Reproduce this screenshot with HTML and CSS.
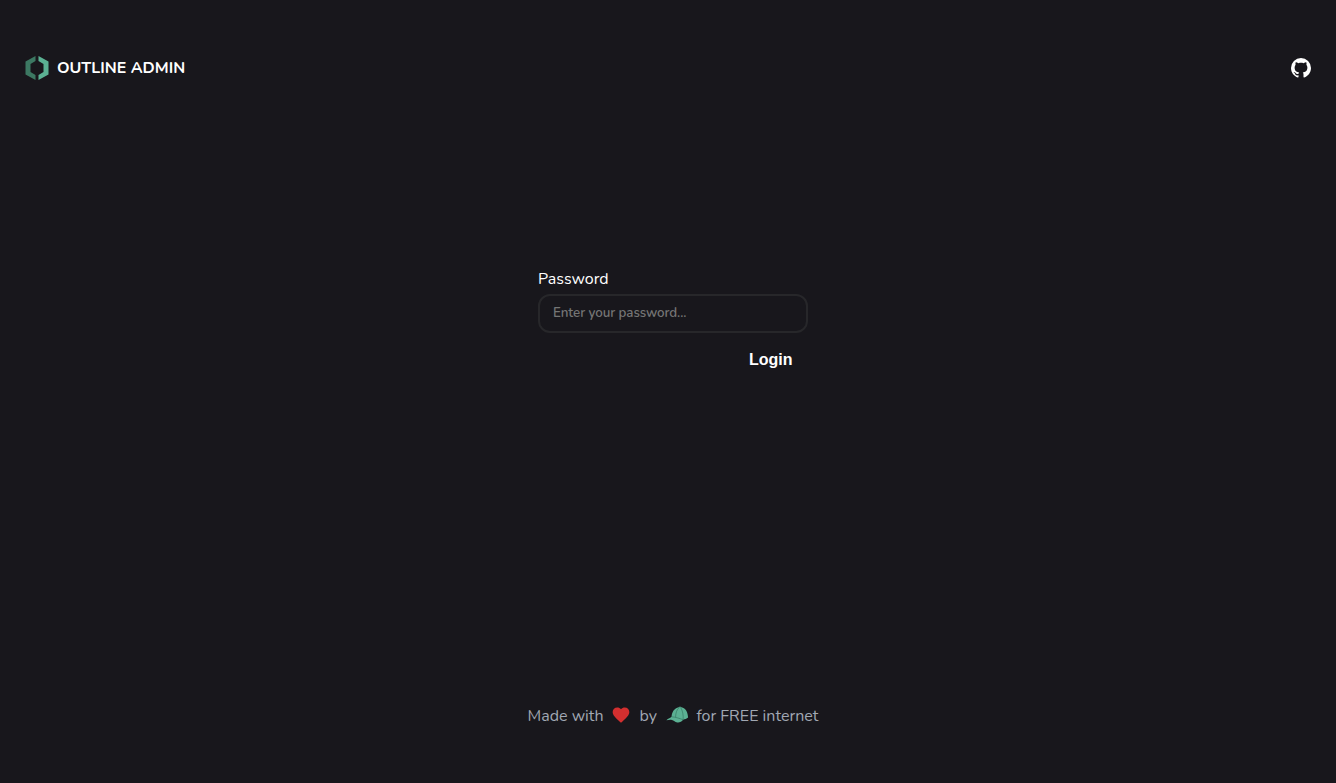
FILE: index.html
```html
<!DOCTYPE html>
<html lang="en">
<head>
<meta charset="utf-8">
<title>Outline Admin</title>
<link rel="stylesheet" href="styles.css">
</head>
<body>
<div class="page">
  <header class="header">
    <a class="brand">
      <svg class="brand-logo" width="24" height="24" viewBox="0 0 24 24">
        <path fill="#3c7862" d="M10.500 0 .5 5.500v13l10 5.500v-5l-5-3V8l5-3z"/>
        <path fill="#5bb193" d="m13.500 0 10 5.500v13l-10 5.500v-5l5-3V8l-5-3z"/>
      </svg>
      <span class="brand-name">OUTLINE ADMIN</span>
    </a>
    <a class="github" aria-label="GitHub">
      <svg width="24" height="24" viewBox="0 0 24 24" fill="#fff"><path d="M12 2A10 10 0 0 0 2 12c0 4.42 2.87 8.17 6.84 9.5.5.08.66-.23.66-.5v-1.69c-2.77.6-3.36-1.34-3.36-1.34-.46-1.16-1.11-1.47-1.11-1.47-.91-.62.07-.6.07-.6 1 .07 1.53 1.03 1.53 1.03.87 1.52 2.34 1.07 2.91.83.09-.65.35-1.09.63-1.34-2.22-.25-4.55-1.11-4.55-4.92 0-1.11.38-2 1.03-2.71-.1-.25-.45-1.29.1-2.64 0 0 .84-.27 2.75 1.02.79-.22 1.65-.33 2.5-.33s1.71.11 2.5.33c1.91-1.29 2.75-1.02 2.75-1.02.55 1.35.2 2.39.1 2.64.65.71 1.03 1.6 1.03 2.71 0 3.82-2.34 4.66-4.57 4.91.36.31.69.92.69 1.85V21c0 .27.16.59.67.5C19.14 20.16 22 16.42 22 12A10 10 0 0 0 12 2z"/></svg>
    </a>
  </header>
  <main class="main">
    <form class="form">
      <label class="label" for="password">Password</label>
      <input class="input" id="password" type="password" placeholder="Enter your password...">
      <button class="login" type="button">Login</button>
    </form>
  </main>
  <footer class="footer">
    <span class="made">Made with</span>
    <svg class="heart" width="20" height="20" viewBox="0 0 24 24" fill="#d32f2f"><path d="m12 21.35-1.45-1.32C5.4 15.36 2 12.28 2 8.5 2 5.42 4.42 3 7.5 3c1.74 0 3.41.81 4.5 2.09C13.09 3.81 14.76 3 16.5 3 19.58 3 22 5.42 22 8.5c0 3.78-3.4 6.86-8.55 11.54z"/></svg>
    <span class="by">by</span>
    <svg class="cap" width="24" height="18" viewBox="0 0 24 18">
      <path fill="#5bb193" d="M.4 14.300c1.100-1.500 3.500-2.200 5.200-3.500C5.800 5.800 8.300 2.200 12.700 1.200l1.300-.6 1.400.6c4.500.7 6.400 5.400 6.700 10.300-1.400 1.200-3.100 1.800-5 2.200-1.500 1.900-3.700 3.100-5.800 2.700-2.400-.4-4-2.400-6.200-2.700-1.700-.2-3.200.5-4.700.6z"/>
      <path fill="none" stroke="#30705b" stroke-width=".6" d="M5.600 10.800c4 .3 7.500 1.500 11.500 2.900M13.500 1.200c-2.800 2.500-3.800 5.500-3.900 10M14.500 1.200c2.200 3.500 3 8 2.600 12.500"/>
    </svg>
    <span class="free">for FREE internet</span>
  </footer>
</div>
</body>
</html>
```
FILE: styles.css
```css
* { box-sizing: border-box; }
body {
  margin: 0;
  background: #18171c;
  color: #fff;
  font: 16px/24px Nunito, "Noto Sans", sans-serif;
}
.page { display: flex; flex-direction: column; height: 783px; overflow: hidden; }
.header {
  display: flex;
  align-items: center;
  justify-content: space-between;
  height: 136px;
  padding: 0 23px 0 25px;
}
.brand { display: flex; align-items: center; gap: 8px; }
.brand-name { font-weight: 700; }
.github, .brand-logo, .heart, .cap { display: flex; flex: none; }
.main {
  flex: 1;
  display: flex;
  justify-content: center;
  padding: 131px 0 0 10px;
}
.form { display: flex; flex-direction: column; width: 270px; }
.input {
  height: 39px;
  margin: 3px 0 15px;
  padding: 0 13px 2px;
  border: 2px solid #27272a;
  border-radius: 12px;
  background: transparent;
  color: #fff;
  font: 600 13.333px Nunito, "Noto Sans", sans-serif;
  letter-spacing: -.08px;
}
.input::placeholder { color: #757575; }
.login {
  align-self: flex-end;
  height: 24px;
  padding: 0 15.500px;
  border: 0;
  background: none;
  color: #fff;
  font: 700 16px "Liberation Sans", Arial, sans-serif;
}
.footer {
  display: flex;
  align-items: center;
  justify-content: center;
  height: 135px;
  padding-left: 10px;
  color: #a1a8b3;
}
.made { width: 76px; margin-right: 7px; }
.by { width: 18px; margin: 0 8px 0 9px; }
.free { width: 122px; margin-left: 7px; }
.heart { margin-bottom: 2px; }
.cap { margin-bottom: 1px; }
.made, .by, .free { white-space: nowrap; }
```
